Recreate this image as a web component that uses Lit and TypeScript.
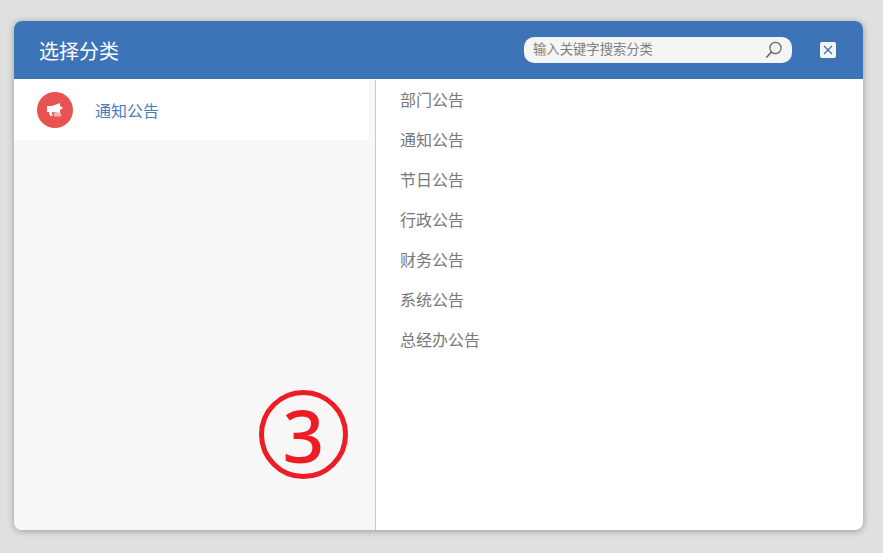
import { LitElement, html, css } from "lit";
import { customElement } from "lit/decorators.js";

const items = ["部门公告", "通知公告", "节日公告", "行政公告", "财务公告", "系统公告", "总经办公告"];

@customElement("app-root")
export class AppRoot extends LitElement {
  static styles = css`
    :host { display: block; width: 883px; height: 553px; background: #e0e0e0; overflow: hidden;
      font-family: "Noto Sans CJK SC", "Liberation Sans", sans-serif; }
    .page { box-sizing: border-box; height: 553px; padding: 21px 20px 23px 14px; }
    .modal { height: 509px; border-radius: 8px; background: #fff; overflow: hidden; display: flex; flex-direction: column;
      box-shadow: 0 1px 7px rgba(0,0,0,.32); }
    .head { height: 58px; flex: none; background: #3c74b7; display: flex; align-items: center; padding: 2px 27px 0 25px; box-sizing: border-box; }
    .title { color: #fff; font-size: 20px; line-height: 28px; flex: 1; }
    .search { box-sizing: border-box; width: 268px; height: 26px; border-radius: 10px; background: #f5f5f5; display: flex; align-items: center; padding: 0 9px; margin: -2px 28px 0 0; }
    .search span { flex: 1; font-size: 13.33px; color: #808080; line-height: 20px; padding-bottom: 2px; }
    .search svg { display: block; }
    .close { width: 16px; height: 16px; border-radius: 2px; background: #f5f5f5; display: flex; align-items: center; justify-content: center; margin-top: -2px; }
    .body { flex: 1; display: flex; min-height: 0; margin-top: 1px; }
    .left { position: relative; width: 361px; flex: none; background: #f7f7f7; border-right: 1px solid #c8c8c8; }
    .cat { width: 355px; height: 60px; background: #fff; display: flex; align-items: center; padding-left: 23px; box-sizing: border-box; }
    .icon { width: 36px; height: 36px; border-radius: 50%; background: #e85250; display: flex; align-items: center; justify-content: center; margin-right: 22px; }
    .cat span { color: #4a7eba; font-size: 16px; line-height: 22px; }
    .mark { position: absolute; left: 245px; top: 310px; box-sizing: border-box; width: 89px; height: 89px; border: 5px solid #ee1c25; border-radius: 50%;
      color: #ee1c25; font-family: "Noto Sans", sans-serif; font-weight: 500; font-size: 73px; line-height: 79px; text-align: center; }
    .right { flex: 1; padding: 0 0 0 24px; margin-top: -1px; }
    .row { height: 40px; line-height: 40px; font-size: 16px; color: #787878; }
  `;

  render() {
    return html`<div class="page"><div class="modal">
      <div class="head">
        <div class="title">选择分类</div>
        <div class="search"><span>输入关键字搜索分类</span>
          <svg width="18" height="18" viewBox="0 0 18 18" fill="none" stroke="#5f5f5f" stroke-width="1.2"><circle cx="10.500" cy="7" r="5.600"/><path d="M6.400 11 1.400 16.600" stroke-width="1.500"/></svg>
        </div>
        <div class="close"><svg width="10" height="10" viewBox="0 0 10 10" stroke="#3c74b7" stroke-width="1.300"><path d="M1 1l8 8M9 1l-8 8"/></svg></div>
      </div>
      <div class="body">
        <div class="left">
          <div class="cat">
            <div class="icon"><svg width="18" height="16" viewBox="0 0 18 16"><path fill="#fff" d="M1 4h5l8-3v10l-8-1H1z"/><path fill="#fff" d="M3 10h3l.5 4H4z"/><path fill="#f3b3b1" d="M8 11h7v3.500H8z"/><path fill="#fff" d="M14 4l3 2-3 2z"/></svg></div>
            <span>通知公告</span>
          </div>
          <div class="mark">3</div>
        </div>
        <div class="right">${items.map((t) => html`<div class="row">${t}</div>`)}</div>
      </div>
    </div></div>`;
  }
}
